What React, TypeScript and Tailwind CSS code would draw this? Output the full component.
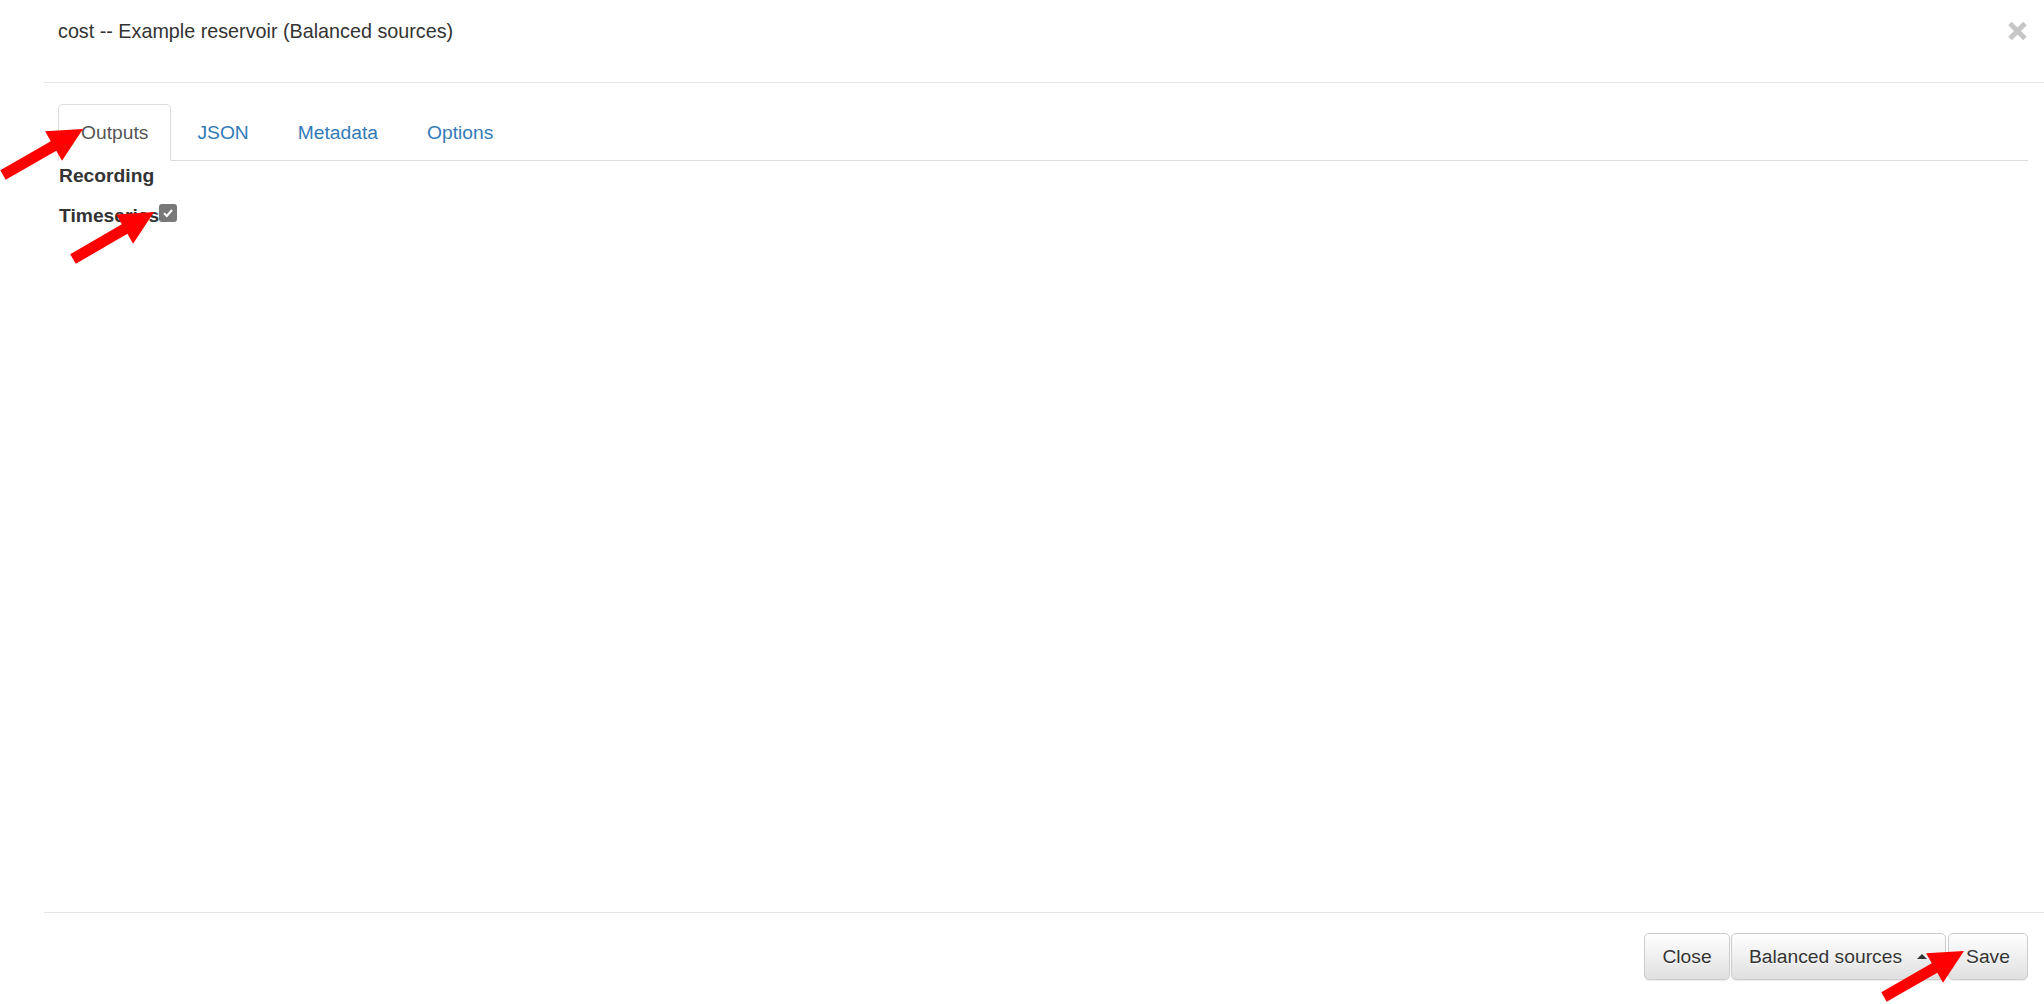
import React from "react";

type Pt = [number, number];

// Red annotation arrows drawn over the dialog
function arrowPoints(tail: Pt, tip: Pt, shaft = 11, headLen = 34, headW = 34) {
  const dx = tip[0] - tail[0];
  const dy = tip[1] - tail[1];
  const len = Math.hypot(dx, dy);
  const ux = dx / len;
  const uy = dy / len;
  const nx = -uy;
  const ny = ux;
  const bx = tip[0] - ux * headLen;
  const by = tip[1] - uy * headLen;
  const pts: Pt[] = [
    [tail[0] + (nx * shaft) / 2, tail[1] + (ny * shaft) / 2],
    [bx + (nx * shaft) / 2, by + (ny * shaft) / 2],
    [bx + (nx * headW) / 2, by + (ny * headW) / 2],
    tip,
    [bx - (nx * headW) / 2, by - (ny * headW) / 2],
    [bx - (nx * shaft) / 2, by - (ny * shaft) / 2],
    [tail[0] - (nx * shaft) / 2, tail[1] - (ny * shaft) / 2],
  ];
  return pts.map((p) => `${p[0].toFixed(1)},${p[1].toFixed(1)}`).join(" ");
}

const arrows: { tail: Pt; tip: Pt }[] = [
  { tail: [3, 175], tip: [83, 129] },
  { tail: [73, 259], tip: [154, 212] },
  { tail: [1884, 997], tip: [1964, 951] },
];

function Tab({ label, active }: { label: string; active?: boolean }) {
  return (
    <div
      className={`-mb-px mr-[3px] flex h-[57px] items-center rounded-t-[5px] border px-[22px] ${
        active
          ? "border-[#ddd] border-b-transparent bg-white text-[#555]"
          : "border-transparent text-[#337ab7]"
      }`}
    >
      {label}
    </div>
  );
}

const btn =
  "flex h-[47px] items-center rounded-[5px] border border-[#ccc] bg-linear-to-b from-white to-[#e0e0e0] text-[#333] shadow-[0_1px_1px_rgba(0,0,0,0.075)] [text-shadow:0_1px_0_#fff]";

export default function App() {
  return (
    <div className="relative h-screen w-full overflow-hidden bg-white font-['Liberation_Sans',Arial,sans-serif] text-[19.25px] leading-[27.5px] text-[#333]">
      <div className="ml-[44px] flex h-full flex-col">
        {/* Header */}
        <div className="flex h-[83px] shrink-0 items-start justify-between border-b border-[#e5e5e5] pl-[14px] pr-[16px] pt-[18px]">
          <div className="text-[19.75px]">cost -- Example reservoir (Balanced sources)</div>
          <svg className="mt-[2px]" width="21" height="22" viewBox="0 0 21 22">
            <path d="M3 3.5L18 18.5M18 3.5L3 18.5" stroke="#c6c6c6" strokeWidth="5" />
          </svg>
        </div>

        {/* Body */}
        <div className="flex-1 pl-[14px] pr-[16px] pt-[21px]">
          <div className="flex border-b border-[#ddd]">
            <Tab label="Outputs" active />
            <Tab label="JSON" />
            <Tab label="Metadata" />
            <Tab label="Options" />
          </div>
          <div className="mt-px pl-px font-bold">Recording</div>
          <div className="mt-[12px] flex items-start pl-px font-bold">
            <span>Timeseries</span>
            <span className="mt-[2px] flex h-[18px] w-[18px] items-center justify-center rounded-[3px] bg-[#787878]">
              <svg width="12" height="12" viewBox="0 0 12 12">
                <path d="M2 6.3L4.8 9L10 3" fill="none" stroke="#fff" strokeWidth="2" />
              </svg>
            </span>
          </div>
        </div>

        {/* Footer */}
        <div className="flex h-[92px] shrink-0 items-start justify-end border-t border-[#e5e5e5] pr-[16px] pt-[20px]">
          <button className={`${btn} mr-[1px] w-[86px] justify-center`}>Close</button>
          <button className={`${btn} mr-[2px] w-[215px] pl-[17px]`}>
            <span>Balanced sources</span>
            <span className="ml-[15px] h-0 w-0 border-x-[5.5px] border-b-[5.5px] border-x-transparent border-b-[#333]" />
          </button>
          <button className={`${btn} w-[80px] justify-center`}>Save</button>
        </div>
      </div>

      <svg className="pointer-events-none absolute inset-0" width="2044" height="1004">
        {arrows.map((a, i) => (
          <polygon key={i} points={arrowPoints(a.tail, a.tip)} fill="#ff0000" />
        ))}
      </svg>
    </div>
  );
}
